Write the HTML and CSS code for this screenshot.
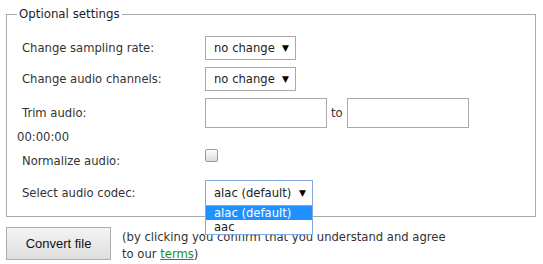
FILE: index.html
```html
<!DOCTYPE html>
<html lang="en">
<head>
  <meta charset="UTF-8" />
  <title>Convert audio</title>
  <link rel="stylesheet" href="styles.css">
</head>
<body>
  <form class="converter">
    <fieldset class="settings">
      <legend>Optional settings</legend>

      <div class="row">
        <label>Change sampling rate:</label>
        <div class="select"><span>no change</span><i>&#9660;</i></div>
      </div>

      <div class="row">
        <label>Change audio channels:</label>
        <div class="select"><span>no change</span><i>&#9660;</i></div>
      </div>

      <div class="row trim">
        <label>Trim audio:</label>
        <input type="text" class="time-input" />
        <span class="to">to</span>
        <input type="text" class="time-input" />
      </div>
      <div class="time-hint">00:00:00</div>

      <div class="row normalize">
        <label>Normalize audio:</label>
        <span class="checkbox"></span>
      </div>

      <div class="row codec">
        <label>Select audio codec:</label>
        <div class="select wide focused">
          <span>alac (default)</span><i>&#9660;</i>
          <ul class="options">
            <li class="active">alac (default)</li>
            <li>aac</li>
          </ul>
        </div>
      </div>
    </fieldset>

    <div class="submit">
      <button type="button" class="convert">Convert file</button>
      <p class="note">(by clicking you confirm that you understand and agree<br>to our <a href="#">terms</a>)</p>
    </div>
  </form>
</body>
</html>
```

FILE: styles.css
```css
body {
  margin: 0;
  font-family: "DejaVu Sans", Verdana, sans-serif;
  font-size: 11.6px;
  color: #333333;
  background: #ffffff;
}

.converter {
  padding: 7px 7px 0 6px;
}

.settings {
  margin: 0;
  width: 530px;
  box-sizing: border-box;
  border: 1px solid #a9a9a9;
  padding: 15px 0 10px 15px;
}

.settings legend {
  padding: 0 2px;
  margin-left: -5px;
  color: #1c1c2c;
  font-size: 11.8px;
}

.row {
  display: flex;
  align-items: center;
  height: 24px;
  margin-bottom: 7px;
}

.row label {
  width: 183px;
}

.select {
  position: relative;
  display: flex;
  align-items: center;
  justify-content: space-between;
  width: 91px;
  height: 24px;
  box-sizing: border-box;
  border: 1px solid #a9a9a9;
  padding: 0 6px 0 8px;
  color: #222;
  background: #fff;
}

.select i {
  font-style: normal;
  font-size: 9px;
  color: #000;
}

.select.wide {
  width: 108px;
  height: 26px;
}

.select.focused {
  border-color: #7fa9e0;
}

.options {
  position: absolute;
  left: -1px;
  top: 24px;
  width: 108px;
  box-sizing: border-box;
  margin: 0;
  padding: 0;
  list-style: none;
  border: 1px solid #7fa9e0;
  background: #fff;
}

.options li {
  height: 14px;
  line-height: 14px;
  padding-left: 8px;
  color: #222;
}

.options li.active {
  background: #1e90ff;
  color: #fff;
}

.row.trim {
  height: 30px;
  margin-bottom: 0;
}

.time-input {
  width: 122px;
  height: 30px;
  box-sizing: border-box;
  border: 1px solid #a9a9a9;
  margin: 0;
}

.to {
  margin: 0 4px 0 4px;
}

.time-hint {
  margin-left: -5px;
  height: 22px;
  line-height: 16px;
  padding-top: 1px;
}

.row.normalize {
  height: 20px;
  margin-bottom: 9px;
}

.checkbox {
  width: 11px;
  height: 11px;
  border: 1px solid #9a9a9a;
  border-radius: 2px;
  background: linear-gradient(#fdfdfd, #dcdcdc);
  margin-top: -12px;
}

.row.codec {
  height: 26px;
  margin-bottom: 0;
}

.submit {
  display: flex;
  align-items: flex-start;
  margin-top: 10px;
}

.convert {
  width: 105px;
  height: 33px;
  border: 1px solid #adadad;
  background: linear-gradient(#f4f4f4, #dedede);
  font-family: "Liberation Sans", Arial, sans-serif;
  font-size: 13px;
  color: #111;
}

.note {
  margin: 2px 0 0 11px;
  line-height: 17px;
}

.note a {
  color: #228b22;
}
```
